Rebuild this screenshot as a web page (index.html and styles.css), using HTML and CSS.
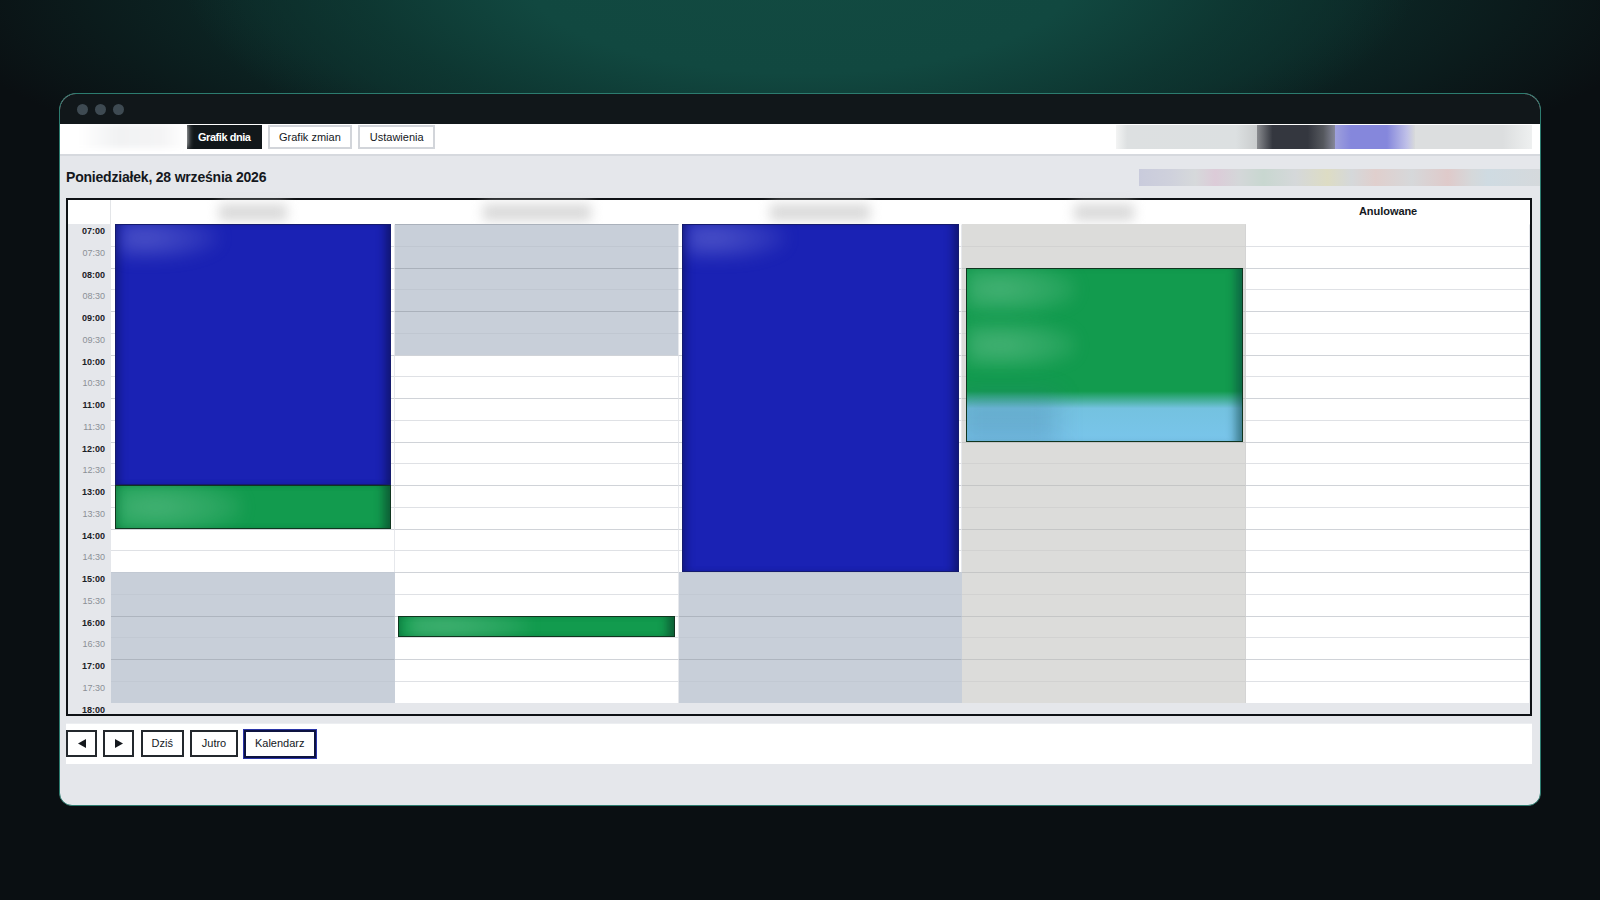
FILE: index.html
```html
<!DOCTYPE html>
<html lang="pl">
<head>
<meta charset="utf-8">
<title>Grafik dnia</title>
<link rel="stylesheet" href="styles.css">
</head>
<body>
<main class="window">
  <div class="titlebar"><i class="dot"></i><i class="dot"></i><i class="dot"></i></div>
  <nav class="nav">
    <div class="logo"></div>
    <div class="tabs">
      <a class="tab tab-active">Grafik dnia</a>
      <a class="tab">Grafik zmian</a>
      <a class="tab">Ustawienia</a>
    </div>
    <div class="user">
      <div class="user-a"></div>
      <div class="user-b"></div>
      <div class="user-c"></div>
      <div class="user-d"></div>
    </div>
  </nav>
  <header class="dayhead">
    <h1 class="date">Poniedziałek, 28 września 2026</h1>
    <div class="legend"></div>
  </header>
  <section class="table">
    <div class="head">
      <div class="head-time"></div>
      <div class="head-cell"><span class="smudge s1"></span></div>
      <div class="head-cell"><span class="smudge s2"></span></div>
      <div class="head-cell"><span class="smudge s3"></span></div>
      <div class="head-cell"><span class="smudge s4"></span></div>
      <div class="head-cell head-text">Anulowane</div>
    </div>
    <div class="body">
      <div class="times">
        <div class="t b">07:00</div><div class="t">07:30</div>
        <div class="t b">08:00</div><div class="t">08:30</div>
        <div class="t b">09:00</div><div class="t">09:30</div>
        <div class="t b">10:00</div><div class="t">10:30</div>
        <div class="t b">11:00</div><div class="t">11:30</div>
        <div class="t b">12:00</div><div class="t">12:30</div>
        <div class="t b">13:00</div><div class="t">13:30</div>
        <div class="t b">14:00</div><div class="t">14:30</div>
        <div class="t b">15:00</div><div class="t">15:30</div>
        <div class="t b">16:00</div><div class="t">16:30</div>
        <div class="t b">17:00</div><div class="t">17:30</div>
        <div class="t b">18:00</div>
      </div>
      <div class="col col-late">
        <div class="rows"><div></div><div></div><div></div><div></div><div></div><div></div><div></div><div></div><div></div><div></div><div></div><div></div><div></div><div></div><div></div><div></div><div></div><div></div><div></div><div></div><div></div><div></div></div>
        <div class="ev blue ev-a"><span class="glow glow-blue"></span></div>
        <div class="ev green ev-b"><span class="glow glow-green glow-wide"></span></div>
      </div>
      <div class="col col-early">
        <div class="rows"><div></div><div></div><div></div><div></div><div></div><div></div><div></div><div></div><div></div><div></div><div></div><div></div><div></div><div></div><div></div><div></div><div></div><div></div><div></div><div></div><div></div><div></div></div>
        <div class="ev green ev-c"><span class="glow glow-green glow-thin"></span></div>
      </div>
      <div class="col col-late">
        <div class="rows"><div></div><div></div><div></div><div></div><div></div><div></div><div></div><div></div><div></div><div></div><div></div><div></div><div></div><div></div><div></div><div></div><div></div><div></div><div></div><div></div><div></div><div></div></div>
        <div class="ev blue ev-d"><span class="glow glow-blue"></span></div>
      </div>
      <div class="col col-beige">
        <div class="rows"><div></div><div></div><div></div><div></div><div></div><div></div><div></div><div></div><div></div><div></div><div></div><div></div><div></div><div></div><div></div><div></div><div></div><div></div><div></div><div></div><div></div><div></div></div>
        <div class="ev mixed ev-e"><span class="glow glow-green glow-1"></span><span class="glow glow-green glow-2"></span><span class="glow-dim"></span></div>
      </div>
      <div class="col">
        <div class="rows"><div></div><div></div><div></div><div></div><div></div><div></div><div></div><div></div><div></div><div></div><div></div><div></div><div></div><div></div><div></div><div></div><div></div><div></div><div></div><div></div><div></div><div></div></div>
      </div>
    </div>
  </section>
  <footer class="toolbar">
    <button class="btn btn-arrow"><svg class="tri" viewBox="0 0 8 9"><path d="M8 0V9L0 4.5Z"/></svg></button>
    <button class="btn btn-arrow"><svg class="tri" viewBox="0 0 8 9"><path d="M0 0V9L8 4.5Z"/></svg></button>
    <button class="btn btn-dzis">Dziś</button>
    <button class="btn btn-jutro">Jutro</button>
    <button class="btn btn-kal">Kalendarz</button>
  </footer>
</main>
</body>
</html>
```

FILE: styles.css
```css
* { box-sizing: border-box; }
html, body { margin: 0; height: 900px; overflow: hidden; }
body {
  padding: 93px 59px 0;
  font-family: "Liberation Sans", Arial, sans-serif;
  color: #14181d;
  background-color: #0a0f12;
  background-image:
    radial-gradient(ellipse 620px 230px at 50% -30px, #124a41 0, #114840 45%, rgba(14, 58, 52, .8) 72%, rgba(10, 15, 18, 0) 100%),
    radial-gradient(ellipse 880px 230px at 50% -10px, rgba(13, 52, 48, .9) 0, rgba(13, 52, 48, .65) 62%, rgba(10, 15, 18, 0) 100%);
  background-repeat: no-repeat;
}
.window {
  width: 1482px;
  height: 713px;
  background: #e5e7eb;
  border: 1px solid #2c7c6f;
  border-radius: 17px 17px 13px 13px;
  overflow: hidden;
}
.titlebar {
  height: 30px;
  background: #11171a;
  display: flex;
  align-items: center;
  gap: 7px;
  padding: 0 0 0 17px;
}
.dot { width: 11px; height: 11px; border-radius: 50%; background: #3e4a52; }
.nav {
  height: 32px;
  background: #fff;
  border-bottom: 2px solid #d6d9de;
  display: flex;
  align-items: flex-start;
  position: relative;
  overflow: hidden;
}
.logo {
  width: 127px;
  height: 24px;
  background: linear-gradient(90deg, #fff 15%, #f1f2f3 45%, #f4f4f5 80%, #fff 100%);
  filter: blur(3px);
}
.tabs { display: flex; gap: 6px; margin: 1px 0 0 0; }
.tab {
  height: 24px;
  line-height: 21px;
  padding: 0 9.5px;
  font-size: 11px;
  font-weight: 400;
  background: #fff;
  border: 2px solid #d2d5da;
}
.tab-active { background: #11171a; color: #fff; border-color: #11171a; font-weight: 700; padding: 0 9px; letter-spacing: -.45px; }
.user {
  margin: 1px 8px 0 auto;
  width: 416px;
  height: 24px;
  display: flex;
  overflow: hidden;
}
.user-a { width: 141px; background: linear-gradient(90deg, #f3f4f4 0, #dde0e1 8%, #dce0e1 85%, #c9cccd 100%); }
.user-b { width: 78px; background: linear-gradient(90deg, #8a8c90 0, #34373f 20%, #34373f 65%, #55585e 85%, #86889a 100%); }
.user-c { width: 80px; background: linear-gradient(90deg, #9ea0dc 0, #8587dc 20%, #8587dc 65%, #c0c1e8 90%, #d8dada 100%); }
.user-d { flex: 1; background: linear-gradient(90deg, #dcdedf 0, #dcdedf 75%, #eef0f0 100%); }
.dayhead {
  height: 42px;
  padding: 0 0 0 6px;
  display: flex;
  align-items: center;
  justify-content: space-between;
}
.date { margin: 0; font-size: 14px; font-weight: 700; letter-spacing: -.2px; }
.legend {
  width: 401px;
  height: 17px;
  background: linear-gradient(90deg, #c9cbdc 0, #cfd1dc 8%, #d6d9db 14%, #dccbd8 19%, #d4d7d9 25%, #c8d7d0 31%, #d5d8da 39%, #dddcc4 47%, #d5d8da 53%, #e0cfcd 59%, #d6d8da 68%, #dfcaca 77%, #d5d8da 83%, #cfdbe2 87%, #d5d9dc 100%);
}
.table {
  width: 1466px;
  height: 518px;
  margin-left: 6px;
  border: 2px solid #0f1215;
  background: #e5e7eb;
}
.head {
  display: grid;
  grid-template-columns: 43px repeat(5, 1fr);
  height: 24px;
  background: #fff;
}
.head-time { border-right: 1px solid #e3e5e8; }
.head-cell { display: flex; align-items: center; justify-content: center; }
.head-text { font-size: 11px; font-weight: 700; padding-bottom: 2px; letter-spacing: -.05px; }
.smudge { height: 17px; background: #dadada; filter: blur(6px); }
.s1 { width: 68px; }
.s2 { width: 108px; }
.s3 { width: 100px; }
.s4 { width: 60px; }
.body {
  display: grid;
  grid-template-columns: 43px repeat(5, 1fr);
  height: 490px;
  align-items: start;
}
.times { display: flex; flex-direction: column; }
.t {
  height: 21.75px;
  padding: 2px 6px 0 0;
  text-align: right;
  font-size: 9px;
  line-height: 10px;
  color: #8b9096;
}
.t.b { color: #1b2025; font-weight: 700; }
.col {
  position: relative;
  height: 478.5px;
  background: #fff;
}
.rows { display: flex; flex-direction: column; }
.rows div { height: 21.75px; border-top: 1px solid #dfe1e5; border-right: 1px solid #e6e8ec; }
.rows div:nth-child(odd) { border-top-color: #d0d3d8; }
.rows div:first-child { border-top-color: transparent; }
.col-late .rows div:nth-child(n+17) { background: #c8cfd9; border-top-color: #c2c9d3; border-right-color: #c8cfd9; }
.col-late .rows div:nth-child(odd):nth-child(n+19) { border-top-color: #aeb5bf; }
.col-early .rows div:nth-child(-n+6) { background: #c8cfd9; border-top-color: #c0c7d1; }
.col-early .rows div:nth-child(odd):nth-child(-n+6) { border-top-color: #aab1bb; }
.col-early .rows div:first-child { border-top-color: #c8cfd9; }
.col-beige .rows div { background: #dcdcda; border-top-color: #d2d2d1; border-right-color: #d4d4d4; }
.col-beige .rows div:nth-child(odd) { border-top-color: #c5c6c6; }
.col-beige .rows div:first-child { border-top-color: #dcdcda; }
.ev {
  position: absolute;
  left: 3.5px;
  right: 3.5px;
  overflow: hidden;
  border: 1px solid #10351f;
}
.ev-a { top: 0; height: 261px; }
.ev-b { top: 261px; height: 43.5px; }
.ev-c { top: 391.5px; height: 21.75px; }
.ev-d { top: 0; height: 348px; }
.ev-e { top: 43.5px; height: 174px; }
.blue {
  background: #1a22b4;
  border-color: #151b6e;
  box-shadow: inset -10px 0 10px -6px rgba(10, 14, 70, .65), inset 8px 0 10px -6px rgba(10, 14, 70, .55);
}
.green {
  background: #129b4e;
  box-shadow: inset -12px 0 10px -6px rgba(10, 60, 40, .65), inset 6px 0 8px -5px rgba(10, 60, 40, .4);
}
.mixed {
  background: linear-gradient(180deg, #129b4e 0, #129b4e 71%, #74c2e0 81%, #79c5eb 100%);
  box-shadow: inset -12px 0 10px -6px rgba(10, 60, 60, .55);
}
.glow { position: absolute; display: block; filter: blur(7px); }
.glow-blue { left: 4px; top: -6px; width: 100px; height: 42px; background: radial-gradient(ellipse at 25% 45%, rgba(125, 130, 220, .5) 0, rgba(125, 130, 220, .22) 50%, rgba(125, 130, 220, 0) 80%); }
.glow-green { background: radial-gradient(ellipse at 30% 50%, rgba(140, 210, 170, .42) 0, rgba(140, 210, 170, .18) 55%, rgba(140, 210, 170, 0) 82%); }
.glow-wide { left: 2px; top: -6px; width: 125px; height: 54px; }
.glow-thin { left: 10px; top: -8px; width: 120px; height: 34px; }
.glow-1 { left: 0; top: -5px; width: 110px; height: 50px; }
.glow-2 { left: 0; top: 52px; width: 110px; height: 48px; }
.glow-dim { position: absolute; display: block; left: -10px; bottom: -6px; width: 100px; height: 52px; background: rgba(60, 110, 150, .24); filter: blur(12px); }
.toolbar {
  width: 1466px;
  height: 41px;
  margin: 7px 0 0 6px;
  padding: 6px 0 0;
  background: #fff;
  border-top: 1px solid #eceef1;
  display: flex;
  align-items: flex-start;
  gap: 6.25px;
}
.btn {
  height: 27px;
  padding: 0 0 1px;
  font: 400 11px "Liberation Sans", Arial, sans-serif;
  color: #14181d;
  background: #fff;
  border: 2px solid #23282d;
  display: flex;
  align-items: center;
  justify-content: center;
}
.btn-arrow { width: 31px; }
.btn-dzis { width: 43.5px; }
.btn-jutro { width: 47.5px; }
.btn-kal { width: 73.5px; height: 30px; margin: -1.5px 0 0 -1px; border: 1px solid #2a34a8; box-shadow: inset 0 0 0 2px #0d1340; }
.tri { width: 8px; height: 9px; fill: #14181d; }
```
